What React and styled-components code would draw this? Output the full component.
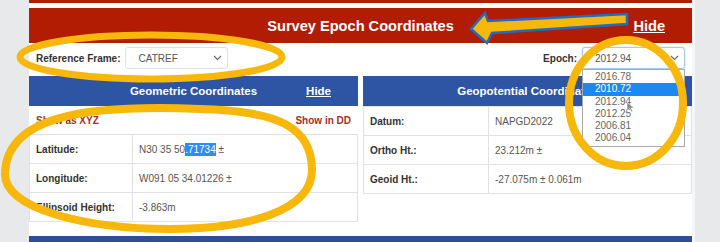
import React from "react";
import styled, { createGlobalStyle } from "styled-components";

const GlobalStyle = createGlobalStyle`
  html, body {
    margin: 0;
    padding: 0;
    background: #e8e9eb;
    font-family: "Liberation Sans", Arial, sans-serif;
  }
`;

const RED = "#b11c02";
const BLUE = "#2d55a3";
const LINE = "#e2e2e2";
const MARKER = "#f8b70b";

const epochs = ["2016.78", "2010.72", "2012.94", "2012.25", "2006.81", "2006.04"];

const geopotential = [
  { label: "Datum:", value: "NAPGD2022" },
  { label: "Ortho Ht.:", value: "23.212m ±" },
  { label: "Geoid Ht.:", value: "-27.075m ± 0.061m" },
];

const Chevron = () => (
  <svg width="9" height="6" viewBox="0 0 9 6">
    <path d="M1 1 L4.5 4.5 L8 1" fill="none" stroke="#666" strokeWidth="1.1" />
  </svg>
);

const App = () => {
  const geometric = [
    { label: "Latitude:", value: <>N30 35 50<Marked>.71734</Marked> ±</> },
    { label: "Longitude:", value: "W091 05 34.01226 ±" },
    { label: "Ellipsoid Height:", value: "-3.863m" },
  ];

  return (
    <Page>
      <GlobalStyle />
      <Sheet>
        <TopStrip />
        <SectionHeader>
          <span />
          <Title>Survey Epoch Coordinates</Title>
          <HideLink $size={14.6}>Hide</HideLink>
        </SectionHeader>

        <Controls>
          <Field>
            <FieldLabel>Reference Frame:</FieldLabel>
            <SelectBox>
              <span>CATREF</span>
              <Chevron />
            </SelectBox>
          </Field>
          <Field>
            <FieldLabel>Epoch:</FieldLabel>
            <SelectWrap>
              <SelectBox $focused>
                <span>2012.94</span>
                <Chevron />
              </SelectBox>
              <OptionList>
                {epochs.map((e) => (
                  <Option key={e} $active={e === "2010.72"}>{e}</Option>
                ))}
              </OptionList>
            </SelectWrap>
          </Field>
        </Controls>

        <Panels>
          <Panel>
            <PanelHeader>
              <span />
              <PanelTitle>Geometric Coordinates</PanelTitle>
              <HideLink $size={11.5}>Hide</HideLink>
            </PanelHeader>
            <ToggleRow>
              <ToggleLink>Show as XYZ</ToggleLink>
              <ToggleLink>Show in DD</ToggleLink>
            </ToggleRow>
            <Table>
              {geometric.map((r) => (
                <Row key={r.label} $labelWidth={103}>
                  <LabelCell>{r.label}</LabelCell>
                  <ValueCell>{r.value}</ValueCell>
                </Row>
              ))}
            </Table>
          </Panel>
          <Panel>
            <PanelHeader>
              <span />
              <PanelTitle>Geopotential Coordinates</PanelTitle>
              <span />
            </PanelHeader>
            <Table>
              {geopotential.map((r) => (
                <Row key={r.label} $labelWidth={125}>
                  <LabelCell>{r.label}</LabelCell>
                  <ValueCell>{r.value}</ValueCell>
                </Row>
              ))}
            </Table>
          </Panel>
        </Panels>

        <NextBar />
      </Sheet>

      {/* hand-drawn markup layered over the screenshot */}
      <Marks viewBox="0 0 720 242" width="720" height="242">
        <ellipse cx="151" cy="57" rx="131" ry="22" fill="none" stroke={MARKER} strokeWidth="7" />
        <path
          d="M200 109 C80 104, 8 118, 5 172 C2 210, 90 229, 170 229 C250 229, 312 210, 312 170 C312 128, 280 111, 200 109 Z"
          fill="none"
          stroke={MARKER}
          strokeWidth="8"
        />
        <ellipse cx="626" cy="103" rx="57" ry="63" fill="none" stroke={MARKER} strokeWidth="8" />
        <polygon
          points="471,29 485,13 488,21 627,14 627,24 492,33 487,43"
          fill={MARKER}
          stroke="#1a6ec8"
          strokeWidth="2.5"
        />
        <path d="M627 102 L627 111 L629.5 108.5 L631.5 112 L632.8 111.3 L631 108 L634 108 Z" fill="#888" stroke="#fff" strokeWidth="0.6" />
      </Marks>
    </Page>
  );
};

const Page = styled.div`
  position: relative;
  width: 720px;
  height: 242px;
  overflow: hidden;
  padding-left: 29px;
  box-sizing: border-box;
`;

const Sheet = styled.div`
  width: 663px;
  background: #fff;
  box-shadow: 3px 0 0 #f6f6f6;
  min-height: 260px;
`;

const TopStrip = styled.div`
  height: 3px;
  background: ${RED};
  margin-bottom: 5px;
`;

const SectionHeader = styled.div`
  display: grid;
  grid-template-columns: 1fr auto 1fr;
  align-items: center;
  height: 35px;
  padding: 0 27px;
  background: ${RED};
  color: #fff;
`;

const Title = styled.div`
  font-size: 14.6px;
  font-weight: bold;
`;

const HideLink = styled.a`
  justify-self: end;
  font-size: ${(p) => p.$size}px;
  font-weight: bold;
  color: #fff;
  text-decoration: underline;
`;

const Controls = styled.div`
  display: flex;
  justify-content: space-between;
  align-items: flex-start;
  height: 33px;
  padding: 4px 7px 0 7px;
  box-sizing: border-box;
`;

const Field = styled.div`
  display: flex;
  align-items: center;
  gap: 5px;
`;

const FieldLabel = styled.span`
  font-size: 10px;
  font-weight: bold;
  color: #333;
`;

const SelectWrap = styled.div`
  position: relative;
`;

const SelectBox = styled.div`
  display: flex;
  align-items: center;
  justify-content: space-between;
  width: 103px;
  height: 22px;
  box-sizing: border-box;
  padding: 0 5px 0 12px;
  border: 1px solid ${(p) => (p.$focused ? "#a9c9ee" : "#e0e0e0")};
  border-radius: 3px;
  box-shadow: ${(p) => (p.$focused ? "0 0 2px rgba(80,140,220,0.35)" : "none")};
  font-size: 10px;
  color: #555;
  background: #fff;
`;

const OptionList = styled.div`
  position: absolute;
  top: 100%;
  left: 0;
  width: 103px;
  box-sizing: border-box;
  border: 1px solid #a8a8a8;
  background: #fff;
  padding: 1px 0;
  z-index: 2;
`;

const Option = styled.div`
  height: 12.3px;
  line-height: 12.3px;
  padding-left: 12px;
  font-size: 10px;
  color: ${(p) => (p.$active ? "#fff" : "#666")};
  background: ${(p) => (p.$active ? "#1e88f0" : "transparent")};
`;

const Panels = styled.div`
  display: grid;
  grid-template-columns: 329px 329px;
  gap: 5px;
  align-items: start;
`;

const Panel = styled.div`
  display: flex;
  flex-direction: column;
`;

const PanelHeader = styled.div`
  display: grid;
  grid-template-columns: 1fr auto 1fr;
  align-items: center;
  height: 30px;
  padding: 0 27px;
  background: ${BLUE};
  color: #fff;
`;

const PanelTitle = styled.div`
  font-size: 11.5px;
  font-weight: bold;
  white-space: nowrap;
`;

const ToggleRow = styled.div`
  display: flex;
  justify-content: space-between;
  align-items: center;
  height: 28px;
  padding: 0 7px;
`;

const ToggleLink = styled.a`
  font-size: 10px;
  font-weight: bold;
  color: #a3301f;
`;

const Table = styled.div`
  border-top: 1px solid ${LINE};
  border-left: 1px solid ${LINE};
  border-right: 1px solid ${LINE};
`;

const Row = styled.div`
  display: grid;
  grid-template-columns: ${(p) => p.$labelWidth}px 1fr;
  height: 28px;
  border-bottom: 1px solid ${LINE};
`;

const LabelCell = styled.div`
  display: flex;
  align-items: center;
  padding-left: 6px;
  border-right: 1px solid ${LINE};
  font-size: 10px;
  font-weight: bold;
  color: #333;
`;

const ValueCell = styled.div`
  display: flex;
  align-items: center;
  padding-left: 6px;
  font-size: 10px;
  color: #555;
  white-space: pre;
`;

const Marked = styled.span`
  background: #2f8cf0;
  color: #fff;
  padding: 1px 0;
`;

const NextBar = styled.div`
  height: 10px;
  margin-top: 14px;
  background: #2d4f94;
`;

const Marks = styled.svg`
  position: absolute;
  top: 0;
  left: 0;
  pointer-events: none;
  z-index: 5;
`;

export default App;
